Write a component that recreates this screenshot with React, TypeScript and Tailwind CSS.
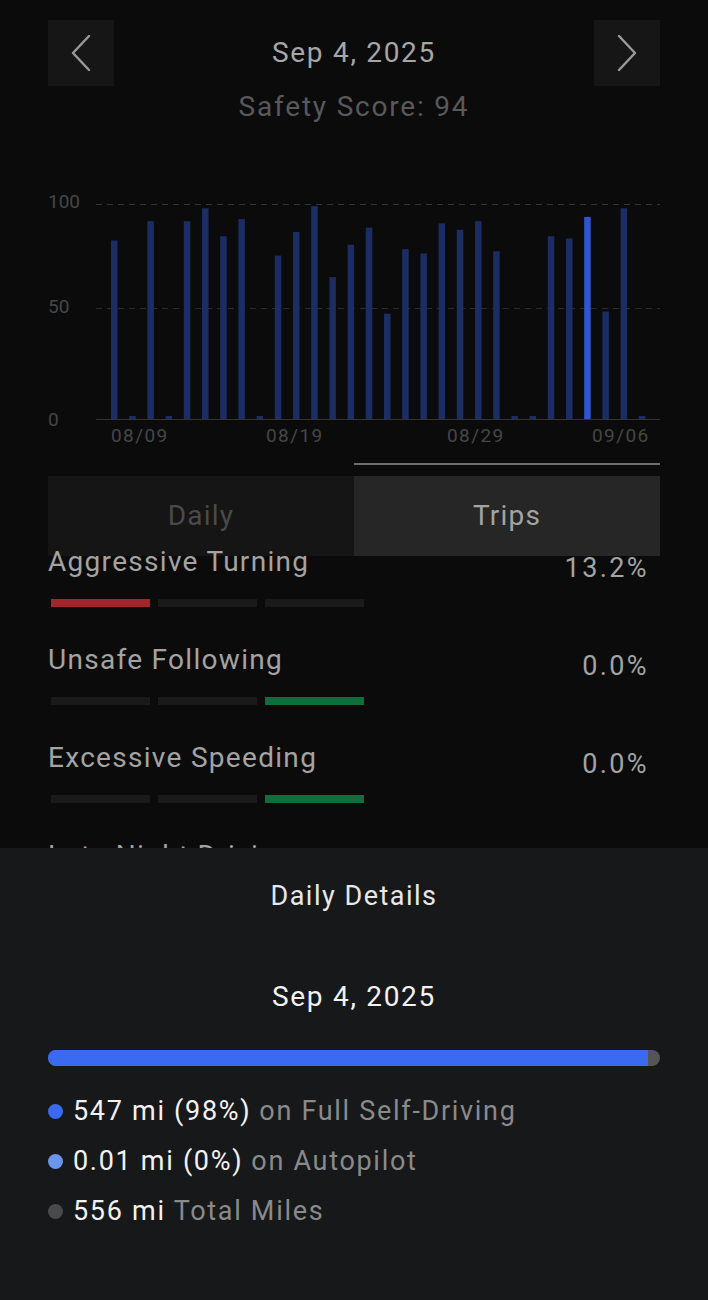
import React from "react";

const values: number[] = [
  83, 1, 92, 1, 92, 98, 85, 93, 1, 76, 87, 99, 66, 81, 89, 49, 79, 77, 91, 88,
  92, 78, 1, 1, 85, 84, 94, 50, 98, 1,
];

function Chevron({ dir }: { dir: "left" | "right" }) {
  return (
    <svg width="20" height="36" viewBox="0 0 20 36" fill="none">
      {dir === "left" ? (
        <path d="M18 1 L2 18 L18 35" stroke="#9a9a9a" strokeWidth="2.4" strokeLinecap="round" strokeLinejoin="round" />
      ) : (
        <path d="M2 1 L18 18 L2 35" stroke="#9a9a9a" strokeWidth="2.4" strokeLinecap="round" strokeLinejoin="round" />
      )}
    </svg>
  );
}

function Chart() {
  const base = 419;
  const scale = 2.15;
  const top = 185;
  return (
    <svg width="708" height="265" viewBox={`0 ${top} 708 265`} className="block">
      <line x1="96" y1="204.5" x2="660" y2="204.5" stroke="#333" strokeWidth="1" strokeDasharray="6 5" />
      <line x1="96" y1="308.5" x2="660" y2="308.5" stroke="#2c2c2c" strokeWidth="1" strokeDasharray="6 5" />
      <line x1="96" y1="419.5" x2="660" y2="419.5" stroke="#333" strokeWidth="1.2" />
      <g fontFamily="Roboto, 'Liberation Sans', sans-serif" fontSize="19" fill="#464646">
        <text x="48" y="208">100</text>
        <text x="48" y="313">50</text>
        <text x="48" y="426">0</text>
      </g>
      <g fontFamily="Roboto, 'Liberation Sans', sans-serif" fontSize="19" fill="#464646" letterSpacing="1.4">
        <text x="111" y="442">08/09</text>
        <text x="266" y="442">08/19</text>
        <text x="447" y="442">08/29</text>
        <text x="592" y="442">09/06</text>
      </g>
      {values.map((v, i) => {
        const x = 111 + i * 18.2;
        const h = v <= 1 ? 3 : v * scale;
        return (
          <rect
            key={i}
            x={x}
            y={base - h}
            width="6.5"
            height={h}
            fill={i === 26 ? "#2f56cc" : "#1c2d63"}
          />
        );
      })}
    </svg>
  );
}

function Segments({ active }: { active: "red" | "green" }) {
  return (
    <div className="flex gap-2 pl-[3px]">
      <div className={`h-2 w-[99px] ${active === "red" ? "bg-[#a3242b]" : "bg-[#1a1a1a]"}`} />
      <div className="h-2 w-[99px] bg-[#1a1a1a]" />
      <div className={`h-2 w-[99px] ${active === "green" ? "bg-[#0f6e3c]" : "bg-[#1a1a1a]"}`} />
    </div>
  );
}

function Row({ title, pct, active }: { title: string; pct: string; active: "red" | "green" }) {
  return (
    <div className="h-[98px]">
      <div className="flex items-start justify-between pr-[11px]">
        <span className="text-[28px] leading-[32px] tracking-[1.3px] text-[#a3a3a3]">{title}</span>
        <span className="mt-[6px] text-[27px] leading-[32px] tracking-[2.4px] text-[#a3a3a3]">{pct}</span>
      </div>
      <div className="mt-[15px]">
        <Segments active={active} />
      </div>
    </div>
  );
}

function Legend({ color, value, label }: { color: string; value: string; label: string }) {
  return (
    <div className="flex h-[50px] items-center">
      <div className={`h-[15px] w-[15px] rounded-full ${color}`} />
      <span className="ml-[10px] text-[27px] tracking-[1.7px] text-[#f2f2f2]">{value}</span>
      <span className="ml-[8px] text-[27px] tracking-[1.7px] text-[#8a8a8a]">{label}</span>
    </div>
  );
}

export default function App() {
  return (
    <div
      className="relative h-[1300px] w-[708px] overflow-hidden bg-[#0b0b0c]"
      style={{ fontFamily: "Roboto, 'Liberation Sans', sans-serif" }}
    >
      <div className="px-12 pt-5">
        <div className="flex items-center justify-between">
          <div className="flex h-[66px] w-[66px] items-center justify-center bg-[#161616]">
            <Chevron dir="left" />
          </div>
          <div className="text-[28px] tracking-[1.7px] text-[#a6a6a6]">Sep 4, 2025</div>
          <div className="flex h-[66px] w-[66px] items-center justify-center bg-[#161616]">
            <Chevron dir="right" />
          </div>
        </div>
        <div className="mt-[3px] text-center text-[28px] leading-[36px] tracking-[1.8px] text-[#595959]">
          Safety Score: 94
        </div>
      </div>

      <div className="mt-[60px]">
        <Chart />
      </div>

      <div className="mt-[13px] px-12">
        <div className="flex">
          <div className="flex-1" />
          <div className="h-[2px] flex-1 bg-[#6e6e6e]" />
        </div>
        <div className="mt-[11px] flex h-[80px]">
          <div className="flex flex-1 items-center justify-center bg-[#151515] text-[28px] tracking-[1.2px] text-[#4a4a4a]">
            Daily
          </div>
          <div className="flex flex-1 items-center justify-center bg-[#262626] text-[28px] tracking-[1.2px] text-[#a3a3a3]">
            Trips
          </div>
        </div>
        <div className="-mt-[10px]">
          <Row title="Aggressive Turning" pct="13.2%" active="red" />
          <Row title="Unsafe Following" pct="0.0%" active="green" />
          <Row title="Excessive Speeding" pct="0.0%" active="green" />
          <Row title="Late Night Driving" pct="0.0%" active="green" />
        </div>
      </div>

      <div className="absolute inset-x-0 top-[848px] bottom-0 bg-[#17181a] px-12">
        <div className="mt-[30px] text-center text-[27px] leading-[36px] tracking-[1.5px] text-[#e8e8e8]">
          Daily Details
        </div>
        <div className="mt-[65px] text-center text-[28px] leading-[36px] tracking-[1.7px] text-[#f2f2f2]">
          Sep 4, 2025
        </div>
        <div className="mt-[35px] flex h-[16px] overflow-hidden rounded-full bg-[#555555]">
          <div className="h-full w-[98%] bg-[#3a6af0]" />
        </div>
        <div className="mt-[20px]">
          <Legend color="bg-[#3a6af0]" value="547 mi (98%)" label="on Full Self-Driving" />
          <Legend color="bg-[#6a95ec]" value="0.01 mi (0%)" label="on Autopilot" />
          <Legend color="bg-[#4a4a4a]" value="556 mi" label="Total Miles" />
        </div>
      </div>
    </div>
  );
}
